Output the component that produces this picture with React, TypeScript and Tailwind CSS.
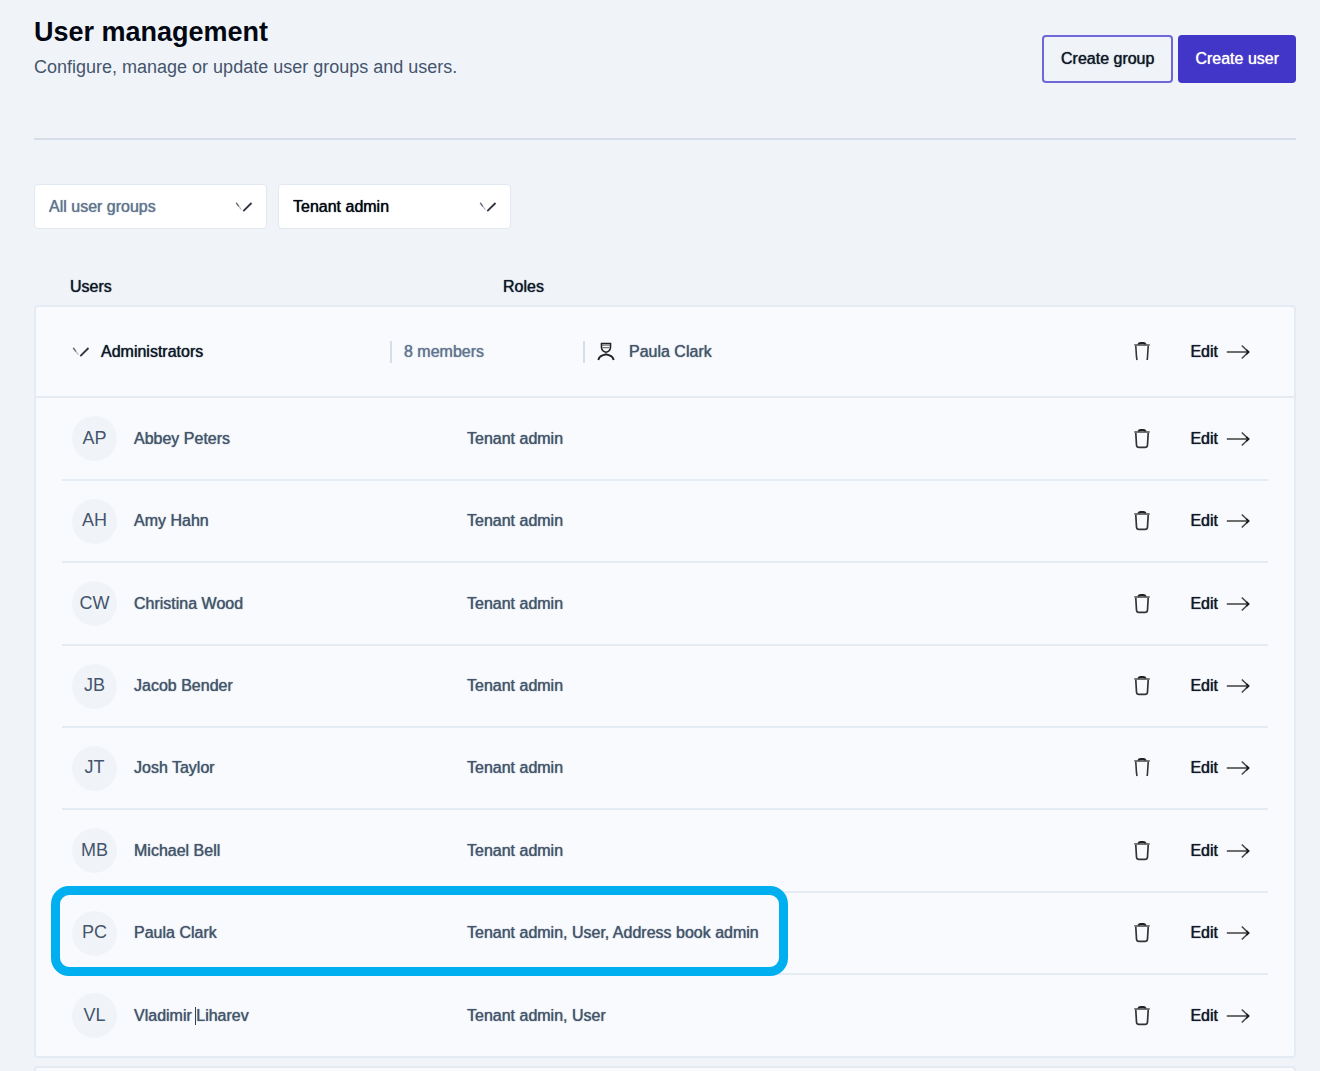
import type { ReactNode } from "react";

type User = { first: string; last: string; roles: string; highlighted?: boolean; caret?: boolean; openBin?: boolean };

const users: User[] = [
  { first: "Abbey", last: "Peters", roles: "Tenant admin" },
  { first: "Amy", last: "Hahn", roles: "Tenant admin" },
  { first: "Christina", last: "Wood", roles: "Tenant admin" },
  { first: "Jacob", last: "Bender", roles: "Tenant admin" },
  { first: "Josh", last: "Taylor", roles: "Tenant admin", openBin: true },
  { first: "Michael", last: "Bell", roles: "Tenant admin" },
  { first: "Paula", last: "Clark", roles: "Tenant admin, User, Address book admin", highlighted: true },
  { first: "Vladimir", last: "Liharev", roles: "Tenant admin, User", caret: true },
];

function ChevronIcon({ className = "" }: { className?: string }) {
  return (
    <svg viewBox="0 0 18 12" className={`h-3 w-[18px] shrink-0 ${className}`} fill="none" aria-hidden="true">
      <path d="M1.2 1.8L4 5.6" stroke="#6f6f7a" strokeWidth="1.5" />
      <path d="M4 5.6L6.4 8.6" stroke="#b9b9c2" strokeWidth="1.2" />
      <path d="M8.3 10.2L16.5 2" stroke="#33313f" strokeWidth="1.8" />
    </svg>
  );
}

function TrashIcon({ open = false }: { open?: boolean }) {
  return (
    <svg viewBox="0 0 16 20" className="h-5 w-4 shrink-0" fill="none" aria-hidden="true">
      <path d="M0.3 3H15.7" stroke="#6b6b6b" strokeWidth="1.9" />
      <path d="M4.3 2.4Q5 1 6.5 1H9.5Q11 1 11.7 2.4" stroke="#222" strokeWidth="1.8" />
      {open ? (
        <path d="M1.8 4L2.5 15L3 18M14.2 4L13.5 15L13.2 18" stroke="#333" strokeWidth="1.6" />
      ) : (
        <path d="M1.8 4L2.5 16Q2.7 18.4 5 18.4H11Q13.3 18.4 13.5 16L14.2 4" stroke="#333" strokeWidth="1.7" />
      )}
    </svg>
  );
}

function ArrowIcon() {
  return (
    <svg viewBox="0 0 24 16" className="h-4 w-6 shrink-0" fill="none" aria-hidden="true">
      <path d="M0.8 8H22" stroke="#666" strokeWidth="1.9" />
      <path d="M15.8 1.5L22.5 8L15.8 14.5" stroke="#4a4a4a" strokeWidth="1.6" />
      <path d="M20.3 5.9L22.5 8L20.3 10.1" stroke="#1a1a1a" strokeWidth="1.7" />
    </svg>
  );
}

function ManagerIcon() {
  return (
    <svg viewBox="0 0 18 19" className="h-[19px] w-[18px] shrink-0" fill="none" stroke="#222" aria-hidden="true">
      <path d="M4.5 1.5H13.5V5.5Q13 9.5 9 10.2Q5 9.5 4.5 5.5Z" strokeWidth="1.6" />
      <path d="M5 3.2H13M5.5 5.6H12.5" stroke="#777" strokeWidth="1.3" />
      <path d="M1.3 18Q2 14.5 5.5 13.4L9 12.3L12.5 13.4Q16 14.5 16.7 18" strokeWidth="1.8" />
    </svg>
  );
}

function Filter({ label, value, muted }: { label: string; value: string; muted?: boolean }) {
  return (
    <div className="relative">
      <select
        aria-label={label}
        className={`h-[45px] w-[233px] appearance-none rounded border border-slate-200 bg-white pl-3.5 pr-10 [text-shadow:0_0_1px_currentColor] ${muted ? "text-slate-500" : "text-gray-950"}`}
      >
        <option>{value}</option>
      </select>
      <ChevronIcon className="pointer-events-none absolute right-3.5 top-[17px]" />
    </div>
  );
}

function RowActions({ name, openBin }: { name: string; openBin?: boolean }) {
  return (
    <div className="flex items-center justify-end gap-10">
      <button type="button" aria-label={`Delete ${name}`}>
        <TrashIcon open={openBin} />
      </button>
      <button
        type="button"
        aria-label={`Edit ${name}`}
        className="flex items-center gap-2 text-gray-900 [text-shadow:0_0_1px_currentColor]"
      >
        Edit
        <ArrowIcon />
      </button>
    </div>
  );
}

function GroupDetail({ className, children }: { className: string; children: ReactNode }) {
  return (
    <div className={`flex items-center ${className}`}>
      <span className="mr-3 h-[22px] w-0.5 bg-[#d5dde9]" />
      {children}
    </div>
  );
}

export default function App() {
  return (
    <main className="flex min-h-screen flex-col bg-[#f0f4f9] pl-[34px] pr-6 font-['Liberation_Sans',Arial,sans-serif] text-base text-slate-600 [text-shadow:0_0_1px_currentColor]">
      <header className="flex items-start justify-between border-b-2 border-[#d5dde9] pb-[55px]">
        <div className="pt-4 [text-shadow:none]">
          <h1 className="text-[27px] leading-8 font-bold text-gray-950">User management</h1>
          <p className="mt-1 text-lg leading-[30px]">Configure, manage or update user groups and users.</p>
        </div>
        <div className="flex gap-[5px] pt-[35px]">
          <button
            type="button"
            className="h-12 rounded border-2 border-[#6f66d8] px-[17px] text-gray-900 [text-shadow:0_0_1px_currentColor]"
          >
            Create group
          </button>
          <button
            type="button"
            className="h-12 rounded bg-[#4136c7] px-[17px] text-white [text-shadow:0_0_1px_currentColor]"
          >
            Create user
          </button>
        </div>
      </header>

      <div className="mt-11 flex gap-[11px]">
        <Filter label="User group" value="All user groups" muted />
        <Filter label="Role" value="Tenant admin" />
      </div>

      <div className="mt-11 flex h-8 pl-9 pt-0.5 leading-6 text-gray-900">
        <span id="col-users" className="w-[433px]">Users</span>
        <span id="col-roles">Roles</span>
      </div>

      <section className="rounded border-2 border-[#e5ebf3] bg-[#f9fafd]">
        <div className="flex h-[91px] items-center border-b-2 border-[#e5ebf3] pl-9 pr-11">
          <button
            type="button"
            aria-expanded="true"
            className="flex w-[318px] items-center gap-[11px] text-gray-900 [text-shadow:0_0_1px_currentColor]"
          >
            <ChevronIcon />
            Administrators
          </button>
          <GroupDetail className="w-[193px] text-slate-500">8 members</GroupDetail>
          <GroupDetail className="flex-1">
            <ManagerIcon />
            <span className="ml-3.5">Paula Clark</span>
          </GroupDetail>
          <RowActions name="Administrators" openBin />
        </div>

        <div className="px-[26px]">
          <table className="w-full border-collapse text-left">
            <tbody>
              {users.map((user) => (
                <tr
                  key={user.first}
                  className="relative h-[82px] border-b-2 border-[#e5ebf3] last:border-b-0 nth-[3n]:h-[83px]"
                >
                  <th scope="row" headers="col-users" className="w-[405px] p-0 pl-2.5 font-normal">
                    <div className="flex items-center gap-[17px]">
                      <span className="flex size-[45px] items-center justify-center rounded-full bg-[#f0f4f9] pb-0.5 text-lg [text-shadow:none]">
                        {user.first[0]}
                        {user.last[0]}
                      </span>
                      <span>
                        {user.first}{" "}
                        {user.caret && <span className="-ml-px inline-block h-[18px] w-px bg-slate-700 align-middle" />}
                        {user.last}
                      </span>
                    </div>
                    {user.highlighted && (
                      <span className="pointer-events-none absolute -bottom-1 -left-[11px] -top-1.5 w-[737px] rounded-[18px] border-[9px] border-[#00aff0]" />
                    )}
                  </th>
                  <td headers="col-roles" className="p-0">{user.roles}</td>
                  <td className="p-0 pr-[18px]">
                    <RowActions name={`${user.first} ${user.last}`} openBin={user.openBin} />
                  </td>
                </tr>
              ))}
            </tbody>
          </table>
        </div>
      </section>

      <section className="mt-2 min-h-1 flex-1 rounded-t border-2 border-b-0 border-[#e5ebf3] bg-[#f9fafd]" />
    </main>
  );
}
